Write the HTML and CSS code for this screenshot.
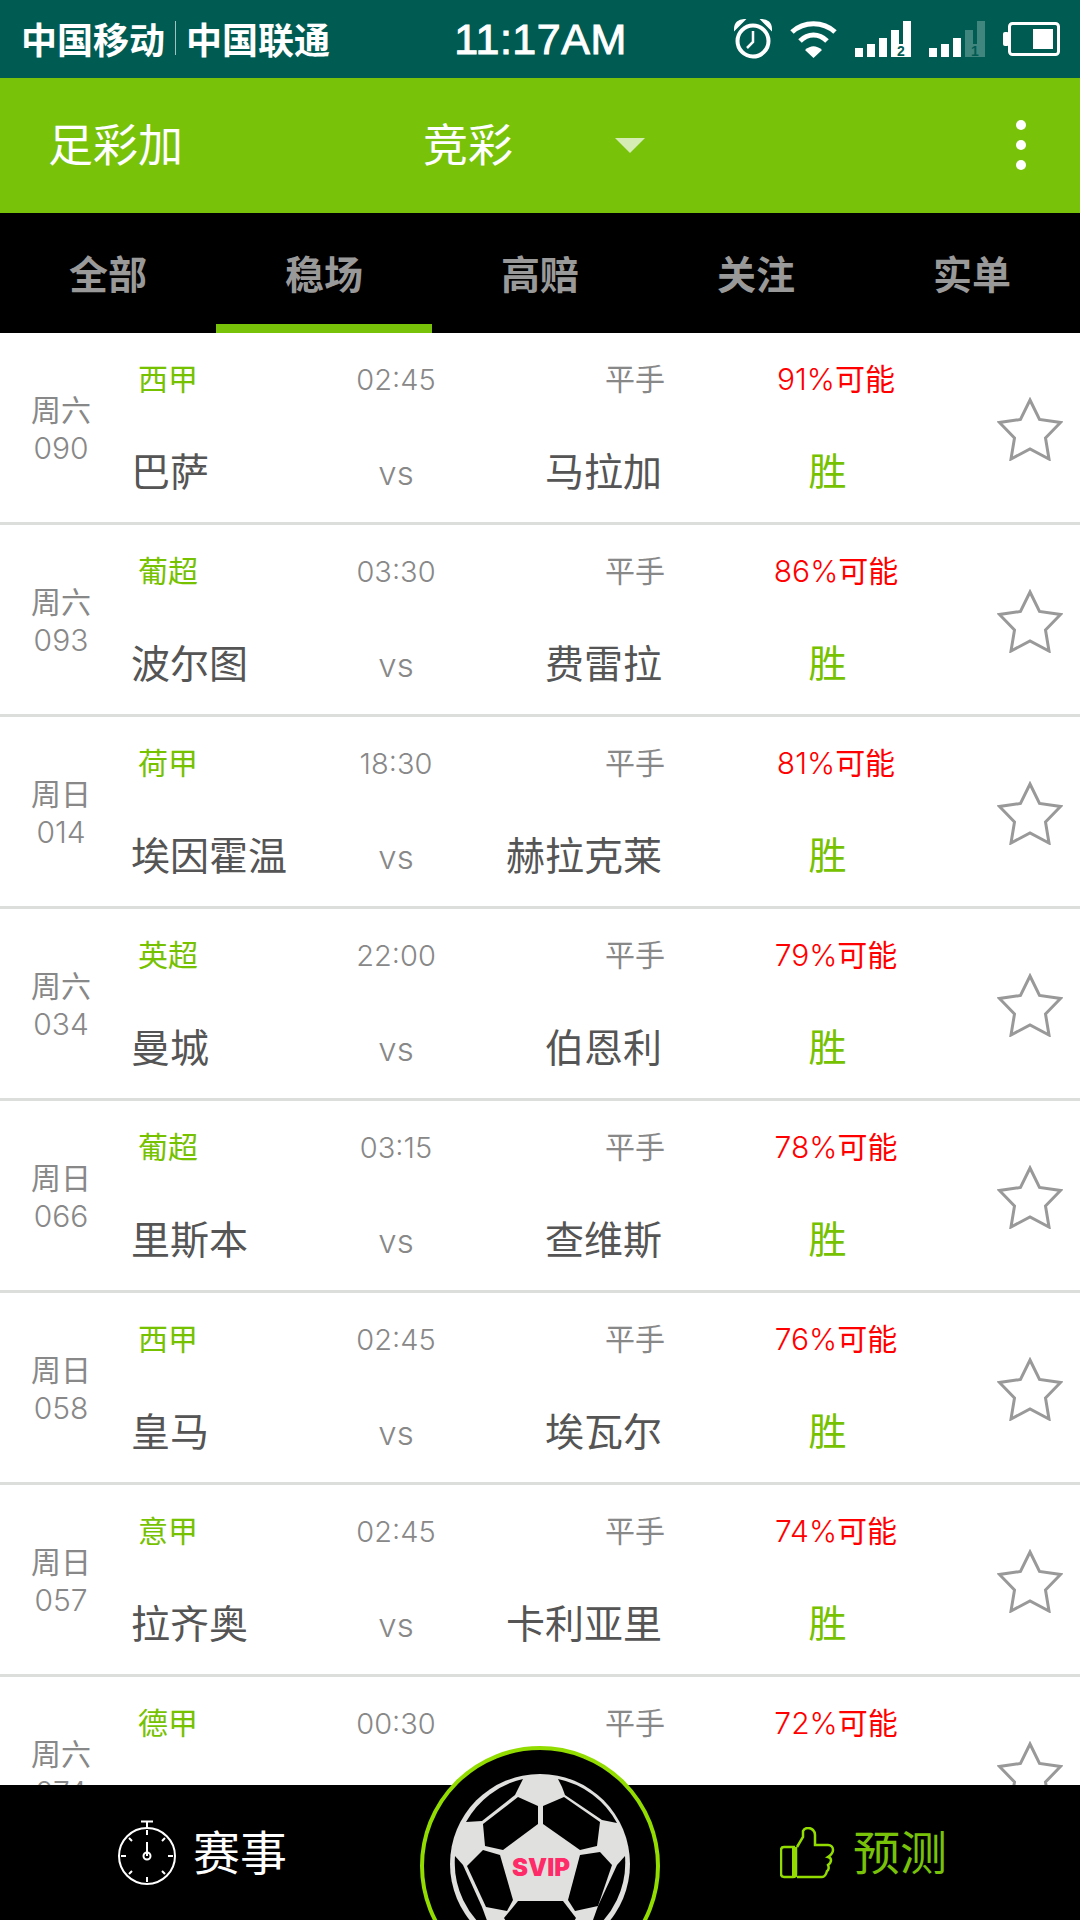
FILE: index.html
```html
<!DOCTYPE html>
<html lang="zh-CN">
<head>
    <meta charset="UTF-8">
    <meta name="viewport" content="width=device-width, initial-scale=1.0">
    <title>足彩加</title>
    <link rel="stylesheet" href="styles.css">
</head>
<body>
    <div class="phone">
        <div class="status-bar">
            <div class="carriers">
                <span>中国移动</span><i class="carrier-sep"></i><span>中国联通</span>
            </div>
            <div class="clock">11:17AM</div>
            <div class="status-icons">
                <svg width="38" height="40" viewBox="0 0 38 40">
                    <circle cx="19" cy="22" r="15.5" fill="none" stroke="#fff" stroke-width="4"/>
                    <path d="M19 12v11l-6 6" fill="none" stroke="#fff" stroke-width="2.5"/>
                    <path d="M1 10C1 4 5 1 10 1L1 10zM37 10C37 4 33 1 28 1L37 10z" fill="#fff" stroke="#fff" stroke-width="2"/>
                </svg>
                <svg width="47" height="37" viewBox="0 0 47 37">
                    <path d="M2 11C14 0 33 0 45 11" fill="none" stroke="#fff" stroke-width="5"/>
                    <path d="M10 20C18 12 29 12 37 20" fill="none" stroke="#fff" stroke-width="5"/>
                    <path d="M15 29C21 24 26 24 32 29L23.500 37z" fill="#fff"/>
                </svg>
                <svg width="56" height="36" viewBox="0 0 56 36">
                    <rect x="0" y="27" width="8" height="9" fill="#fff"/>
                    <rect x="12" y="23" width="8" height="13" fill="#fff"/>
                    <rect x="24" y="17" width="8" height="19" fill="#fff"/>
                    <rect x="36" y="9" width="8" height="27" fill="#fff"/>
                    <rect x="48" y="0" width="8" height="36" fill="#fff"/>
                    <rect x="36" y="23" width="20" height="13" fill="#fff"/>
                    <text class="sim-no" x="46" y="34.500">2</text>
                </svg>
                <svg width="56" height="36" viewBox="0 0 56 36">
                    <rect x="0" y="27" width="8" height="9" fill="#fff"/>
                    <rect x="12" y="23" width="8" height="13" fill="#fff"/>
                    <rect x="24" y="17" width="8" height="19" fill="#fff"/>
                    <g opacity="0.25">
                        <rect x="36" y="9" width="8" height="14" fill="#fff"/>
                        <rect x="48" y="0" width="8" height="23" fill="#fff"/>
                        <rect x="36" y="23" width="20" height="13" fill="#fff"/>
                    </g>
                    <text class="sim-no" x="46" y="34.500">1</text>
                </svg>
                <svg width="57" height="34" viewBox="0 0 57 34">
                    <rect x="0" y="10" width="6" height="14" rx="2" fill="#fff"/>
                    <rect x="6.500" y="1.500" width="49" height="31" rx="3" fill="none" stroke="#fff" stroke-width="3"/>
                    <rect x="30" y="7" width="20" height="20" fill="#fff"/>
                </svg>
            </div>
        </div>

        <div class="app-bar">
            <div class="app-title">足彩加</div>
            <div class="app-filter">竞彩</div>
            <i class="filter-arrow"></i>
            <div class="more-dots"><i></i><i></i><i></i></div>
        </div>

        <div class="tabs">
            <div class="tab">全部</div>
            <div class="tab active">稳场</div>
            <div class="tab">高赔</div>
            <div class="tab">关注</div>
            <div class="tab">实单</div>
        </div>

        <div class="match-list">
            <div class="match">
                <div class="match-date">周六<br><span class="num">090</span></div>
                <div class="league">西甲</div>
                <div class="kickoff">02:45</div>
                <div class="handicap">平手</div>
                <div class="chance"><span class="num">91%</span>可能</div>
                <div class="team">巴萨</div>
                <div class="vs">vs</div>
                <div class="team away">马拉加</div>
                <div class="pick">胜</div>
                <svg class="star" viewBox="0 0 66 64"><path d="M33 3l9.500 19.500 21 3-15 15.500 3.500 21L33 52 14 62l3.500-21L2.500 25.500l21-3z"/></svg>
            </div>
            <div class="match">
                <div class="match-date">周六<br><span class="num">093</span></div>
                <div class="league">葡超</div>
                <div class="kickoff">03:30</div>
                <div class="handicap">平手</div>
                <div class="chance"><span class="num">86%</span>可能</div>
                <div class="team">波尔图</div>
                <div class="vs">vs</div>
                <div class="team away">费雷拉</div>
                <div class="pick">胜</div>
                <svg class="star" viewBox="0 0 66 64"><path d="M33 3l9.500 19.500 21 3-15 15.500 3.500 21L33 52 14 62l3.500-21L2.500 25.500l21-3z"/></svg>
            </div>
            <div class="match">
                <div class="match-date">周日<br><span class="num">014</span></div>
                <div class="league">荷甲</div>
                <div class="kickoff">18:30</div>
                <div class="handicap">平手</div>
                <div class="chance"><span class="num">81%</span>可能</div>
                <div class="team">埃因霍温</div>
                <div class="vs">vs</div>
                <div class="team away">赫拉克莱</div>
                <div class="pick">胜</div>
                <svg class="star" viewBox="0 0 66 64"><path d="M33 3l9.500 19.500 21 3-15 15.500 3.500 21L33 52 14 62l3.500-21L2.500 25.500l21-3z"/></svg>
            </div>
            <div class="match">
                <div class="match-date">周六<br><span class="num">034</span></div>
                <div class="league">英超</div>
                <div class="kickoff">22:00</div>
                <div class="handicap">平手</div>
                <div class="chance"><span class="num">79%</span>可能</div>
                <div class="team">曼城</div>
                <div class="vs">vs</div>
                <div class="team away">伯恩利</div>
                <div class="pick">胜</div>
                <svg class="star" viewBox="0 0 66 64"><path d="M33 3l9.500 19.500 21 3-15 15.500 3.500 21L33 52 14 62l3.500-21L2.500 25.500l21-3z"/></svg>
            </div>
            <div class="match">
                <div class="match-date">周日<br><span class="num">066</span></div>
                <div class="league">葡超</div>
                <div class="kickoff">03:15</div>
                <div class="handicap">平手</div>
                <div class="chance"><span class="num">78%</span>可能</div>
                <div class="team">里斯本</div>
                <div class="vs">vs</div>
                <div class="team away">查维斯</div>
                <div class="pick">胜</div>
                <svg class="star" viewBox="0 0 66 64"><path d="M33 3l9.500 19.500 21 3-15 15.500 3.500 21L33 52 14 62l3.500-21L2.500 25.500l21-3z"/></svg>
            </div>
            <div class="match">
                <div class="match-date">周日<br><span class="num">058</span></div>
                <div class="league">西甲</div>
                <div class="kickoff">02:45</div>
                <div class="handicap">平手</div>
                <div class="chance"><span class="num">76%</span>可能</div>
                <div class="team">皇马</div>
                <div class="vs">vs</div>
                <div class="team away">埃瓦尔</div>
                <div class="pick">胜</div>
                <svg class="star" viewBox="0 0 66 64"><path d="M33 3l9.500 19.500 21 3-15 15.500 3.500 21L33 52 14 62l3.500-21L2.500 25.500l21-3z"/></svg>
            </div>
            <div class="match">
                <div class="match-date">周日<br><span class="num">057</span></div>
                <div class="league">意甲</div>
                <div class="kickoff">02:45</div>
                <div class="handicap">平手</div>
                <div class="chance"><span class="num">74%</span>可能</div>
                <div class="team">拉齐奥</div>
                <div class="vs">vs</div>
                <div class="team away">卡利亚里</div>
                <div class="pick">胜</div>
                <svg class="star" viewBox="0 0 66 64"><path d="M33 3l9.500 19.500 21 3-15 15.500 3.500 21L33 52 14 62l3.500-21L2.500 25.500l21-3z"/></svg>
            </div>
            <div class="match">
                <div class="match-date">周六<br><span class="num">074</span></div>
                <div class="league">德甲</div>
                <div class="kickoff">00:30</div>
                <div class="handicap">平手</div>
                <div class="chance"><span class="num">72%</span>可能</div>
                <svg class="star" viewBox="0 0 66 64"><path d="M33 3l9.500 19.500 21 3-15 15.500 3.500 21L33 52 14 62l3.500-21L2.500 25.500l21-3z"/></svg>
            </div>
        </div>

        <div class="bottom-bar">
            <div class="bottom-item">
                <svg class="watch" width="60" height="66" viewBox="0 0 60 66">
                    <circle cx="30" cy="36" r="28" fill="none" stroke="#fff" stroke-width="2"/>
                    <path d="M24 1.500h12M30 1.500V8M30 36V22M30 10v5M30 57v5M4 36h5M51 36h5M12 18l3 3M48 18l-3 3M12 54l3-3M48 54l-3-3" fill="none" stroke="#fff" stroke-width="2"/>
                    <circle cx="30" cy="36" r="3.500" fill="none" stroke="#fff" stroke-width="2"/>
                </svg>
                <span>赛事</span>
            </div>
            <div class="bottom-item on">
                <svg class="thumb" width="56" height="52" viewBox="0 0 56 52">
                    <path d="M15 20H4C2 20 1 21 1 23V47C1 49 2 50 4 50H13C15 50 16 49 16 47V20" fill="none" stroke="#92dc00" stroke-width="2.500"/>
                    <rect x="12" y="20" width="5" height="30" fill="#92dc00"/>
                    <path d="M17 20L23 10V4C24 2 26 1 28 1C32 1 35 4 35 8V18H48C51 18 53 20 53 23C53 26 51 28 48 30C52 31 52 35 48 38C49 40 49 43 47 44C46 48 45 50 42 50H17" fill="none" stroke="#92dc00" stroke-width="2.500"/>
                </svg>
                <span>预测</span>
            </div>
            <div class="ball-badge">
                <svg width="240" height="174" viewBox="-120 -120 240 174">
                    <circle cx="0" cy="0" r="118" fill="#000" stroke="#92dc00" stroke-width="4"/>
                    <circle cx="0" cy="-2" r="90" fill="#e0e0de"/>
                    <g fill="#000" transform="translate(0 -2)">
                        <path d="M-22 -67L-2 -58V-40L-37 -14L-55 -18L-57 -40z"/>
                        <path d="M24 -67L3 -58V-40L40 -14L57 -18L60 -42z"/>
                        <path d="M-17 -85A87 87 0 0 0 -74 -42L-58 -43L-25 -69L-21 -77z"/>
                        <path d="M18 -85A87 87 0 0 1 77 -41L62 -44L25 -69L22 -77z"/>
                        <path d="M-57 -14L-40 -9L-27 36L-33 47L-54 43L-73 2z"/>
                        <path d="M60 -12L40 -9L28 36L35 47L58 42L72 1z"/>
                        <path d="M-85 -8L-77 1L-58 43L-48 70A87 87 0 0 1 -85 -8z"/>
                        <path d="M85 -8L77 1L58 42L48 70A87 87 0 0 0 85 -8z"/>
                        <path d="M-22 37H23L36 54L20 80H-20L-36 54z"/>
                    </g>
                    <text class="svip" x="1" y="10">SVIP</text>
                </svg>
            </div>
        </div>
    </div>
</body>
</html>
```

FILE: styles.css
```css
* {
    box-sizing: border-box;
}
body {
    margin: 0;
    font-family: "Noto Sans CJK SC", "Noto Sans", sans-serif;
    background: #fff;
}
.phone {
    position: relative;
    display: flex;
    flex-direction: column;
    width: 1080px;
    height: 1920px;
    overflow: hidden;
}

/* status bar */
.status-bar {
    display: grid;
    grid-template-columns: 1fr auto 1fr;
    align-items: center;
    height: 78px;
    padding: 0 20px 0 21px;
    background: #005c53;
    color: #fff;
}
.carriers {
    display: flex;
    align-items: center;
    padding-bottom: 2px;
    font-size: 36px;
    font-weight: 700;
    line-height: 40px;
}
.carrier-sep {
    width: 1px;
    height: 34px;
    margin: 0 10px;
    background: #9fc4bf;
}
.clock {
    font-family: "Liberation Sans", sans-serif;
    font-size: 43px;
    letter-spacing: 0.5px;
    -webkit-text-stroke: 1px #fff;
}
.status-icons {
    display: flex;
    align-items: center;
    justify-content: flex-end;
    gap: 18px;
}
.sim-no {
    font-family: "Liberation Sans", sans-serif;
    font-size: 14px;
    font-weight: 700;
    text-anchor: middle;
    fill: #005c53;
}

/* app bar */
.app-bar {
    display: flex;
    align-items: center;
    height: 135px;
    padding: 0 0 6px 48px;
    background: #78c20a;
    color: #fff;
    font-size: 45px;
}
.app-filter {
    margin-left: 240px;
}
.filter-arrow {
    width: 0;
    height: 0;
    margin-top: 6px;
    margin-left: 102px;
    border-left: 15px solid transparent;
    border-right: 15px solid transparent;
    border-top: 15px solid #d5ecb5;
}
.more-dots {
    display: flex;
    flex-direction: column;
    gap: 10px;
    margin-top: 4px;
    margin-left: auto;
    margin-right: 54px;
}
.more-dots i {
    width: 10px;
    height: 10px;
    border-radius: 50%;
    background: #fff;
}

/* tabs */
.tabs {
    display: flex;
    height: 120px;
    background: #000;
}
.tab {
    display: flex;
    flex: 1;
    align-items: center;
    justify-content: center;
    padding-bottom: 3px;
    color: #999;
    font-size: 39px;
    font-weight: 700;
}
.tab.active {
    box-shadow: inset 0 -9px 0 #78c20a;
}

/* match rows */
.match-list {
    flex: 1;
    overflow: hidden;
}
.match {
    display: grid;
    grid-template-columns: 131px 191px 148px 192px 330px 88px;
    grid-template-rows: 92px 94px;
    align-items: center;
    height: 192px;
    border-bottom: 3px solid #dcdedb;
    color: #888;
    font-size: 30px;
}
.num {
    font-family: "Inter", sans-serif;
    font-weight: 300;
}
.match-date {
    grid-row: 1 / 3;
    padding: 4px 9px 0 0;
    text-align: center;
    line-height: 38px;
}
.league {
    padding: 0 0 5px 7px;
    color: #76c100;
}
.kickoff,
.vs {
    text-align: center;
    font-family: "Inter", sans-serif;
    font-weight: 300;
}
.kickoff {
    font-size: 29px;
}
.vs {
    padding-top: 2px;
    font-size: 33px;
}
.handicap {
    margin-right: -3px;
    padding-bottom: 5px;
    text-align: right;
}
.chance {
    padding: 0 0 5px 18px;
    text-align: center;
    color: #f00;
}
.team {
    padding-bottom: 7px;
    color: #555;
    font-size: 39px;
}
.team.away {
    text-align: right;
}
.pick {
    padding: 0 0 7px 1px;
    text-align: center;
    color: #76c100;
    font-size: 38px;
}
.star {
    grid-column: 6;
    grid-row: 1 / 3;
    width: 66px;
    height: 64px;
    margin: 6px 0 0 5px;
    fill: none;
    stroke: #999;
    stroke-width: 3;
}

/* bottom bar */
.bottom-bar {
    position: relative;
    display: flex;
    flex: none;
    height: 135px;
    background: #000;
    color: #fff;
    font-size: 47px;
}
.bottom-item {
    display: flex;
    align-items: center;
    gap: 16px;
    width: 540px;
    padding-left: 117px;
}
.bottom-item span {
    padding-bottom: 6px;
}
.bottom-item.on {
    padding-left: 240px;
    color: #78c20a;
    gap: 17px;
}
.ball-badge {
    position: absolute;
    top: -39px;
    left: 420px;
    line-height: 0;
}
.svip {
    font-family: "Inter", "Liberation Sans", sans-serif;
    font-size: 24px;
    font-weight: 900;
    text-anchor: middle;
    fill: #ff2a68;
}
```
